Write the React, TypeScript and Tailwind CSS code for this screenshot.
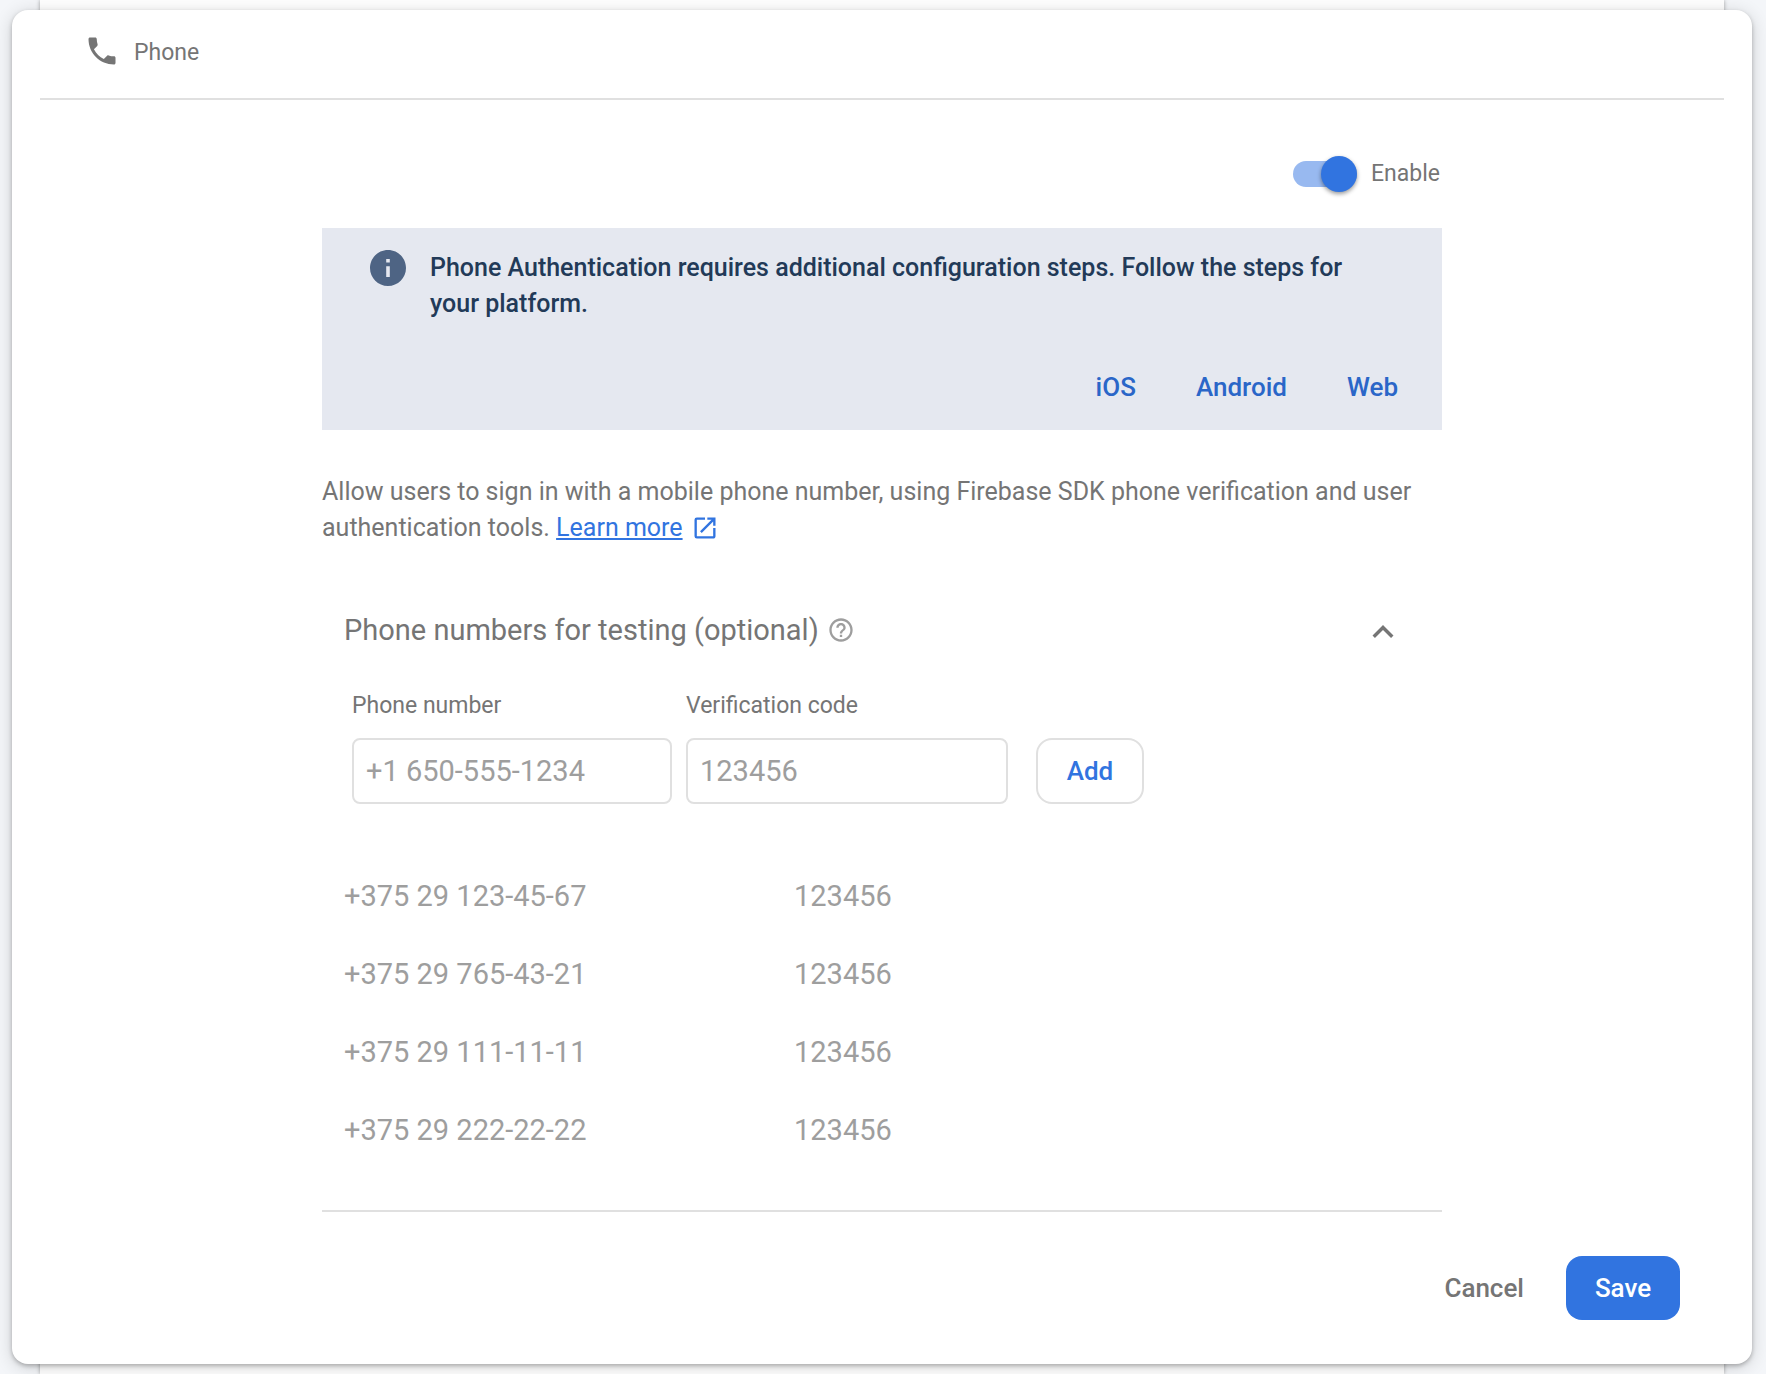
import { useState } from "react";
import { MdExpandLess, MdHelpOutline, MdOpenInNew, MdPhone } from "react-icons/md";

const testNumbers = [
  { phone: "+375 29 123-45-67", code: "123456" },
  { phone: "+375 29 765-43-21", code: "123456" },
  { phone: "+375 29 111-11-11", code: "123456" },
  { phone: "+375 29 222-22-22", code: "123456" },
];

const platforms = ["iOS", "Android", "Web"];

function InfoIcon() {
  return (
    <svg viewBox="2 2 20 20" className="size-9 shrink-0 fill-[#4e6484]" aria-hidden="true">
      <path d="M12 2C6.48 2 2 6.48 2 12s4.48 10 10 10 10-4.48 10-10S17.52 2 12 2zm1 15h-2v-6h2v6zm0-8h-2V7h2v2z" />
    </svg>
  );
}

function PlatformBanner() {
  return (
    <section className="bg-[#e5e8f0] pt-[22px] pr-11 pb-3.5 pl-12">
      <div className="flex gap-6 pr-10">
        <InfoIcon />
        <p className="text-[25px] leading-9 font-medium text-[#223a58]">
          Phone Authentication requires additional configuration steps. Follow the steps for your platform.
        </p>
      </div>
      <nav className="mt-9 flex justify-end gap-[60px] text-[26px] leading-[58px] font-medium text-[#2a66c8]">
        {platforms.map((name) => (
          <a key={name} href="#">
            {name}
          </a>
        ))}
      </nav>
    </section>
  );
}

function TestNumbers() {
  const [open, setOpen] = useState(true);
  return (
    <section className="px-[22px] pt-14">
      <div className="flex items-center justify-between pr-4">
        <h2 className="flex items-center gap-2 text-[29px] leading-[56px]">
          Phone numbers for testing (optional)
          <MdHelpOutline className="size-7 text-[#9e9e9e]" />
        </h2>
        <button
          type="button"
          aria-label="Toggle test numbers"
          aria-expanded={open}
          onClick={() => setOpen(!open)}
          className="pt-1"
        >
          <MdExpandLess className="size-[42px]" />
        </button>
      </div>
      {open && (
        <>
          <form className="mt-8 flex items-end pl-2" onSubmit={(e) => e.preventDefault()}>
            <div className="flex flex-col gap-4">
              <label htmlFor="phone" className="text-[23px] leading-8">
                Phone number
              </label>
              <input
                id="phone"
                type="tel"
                placeholder="+1 650-555-1234"
                className="h-[66px] w-80 rounded-lg border-2 border-[#e0e0e0] px-3 text-[29px] placeholder:text-[#9e9e9e]"
              />
            </div>
            <div className="ml-3.5 flex flex-col gap-4">
              <label htmlFor="code" className="text-[23px] leading-8">
                Verification code
              </label>
              <input
                id="code"
                type="text"
                placeholder="123456"
                className="h-[66px] w-[322px] rounded-lg border-2 border-[#e0e0e0] px-3 text-[29px] placeholder:text-[#9e9e9e]"
              />
            </div>
            <button
              type="submit"
              className="ml-7 h-[66px] w-[108px] rounded-2xl border-2 border-[#e0e0e0] text-[26px] font-medium text-[#3174e0]"
            >
              Add
            </button>
          </form>
          <table className="mt-[54px] w-full table-fixed text-left text-[29px] text-[#9e9e9e]">
            <tbody>
              {testNumbers.map(({ phone, code }) => (
                <tr key={phone} className="h-[78px]">
                  <td className="w-[450px]">{phone}</td>
                  <td>{code}</td>
                </tr>
              ))}
            </tbody>
          </table>
        </>
      )}
    </section>
  );
}

export default function App() {
  const [enabled, setEnabled] = useState(true);
  return (
    <div className="min-h-screen bg-[#f4f6f9] pr-[42px] pl-10 font-[Roboto,sans-serif] text-[#757575]">
      <div className="flex min-h-screen flex-col bg-white py-2.5 shadow-[0_0_4px_rgba(0,0,0,0.35)]">
        <main className="-mx-7 flex-1 rounded-2xl bg-white shadow-[0_2px_4px_rgba(0,0,0,0.25),0_3px_18px_rgba(0,0,0,0.16)]">
          <header className="mx-7 flex h-[90px] items-center gap-3.5 border-b-2 border-[#e0e0e0] pb-1.5 pl-11">
            <MdPhone className="size-9" />
            <h1 className="pt-1 text-[23px] leading-8">Phone</h1>
          </header>

          <div className="mx-auto max-w-[1120px] border-b-2 border-[#e0e0e0] pb-10">
            <div className="flex h-32 items-center justify-end pt-5 pr-0.5">
              <label className="flex items-center gap-3.5 text-[23px] leading-8">
                <input
                  type="checkbox"
                  role="switch"
                  checked={enabled}
                  onChange={() => setEnabled(!enabled)}
                  className="flex h-[26px] w-16 appearance-none items-center justify-start rounded-full bg-[#bdbdbd] before:size-9 before:shrink-0 before:rounded-full before:bg-white before:shadow-[0_2px_4px_rgba(0,0,0,0.4)] checked:justify-end checked:bg-[#98b9f0] checked:before:bg-[#3174e0]"
                />
                Enable
              </label>
            </div>
            <PlatformBanner />
            <p className="mt-11 text-[25px] leading-9">
              Allow users to sign in with a mobile phone number, using Firebase SDK phone verification and user
              authentication tools.{" "}
              <a href="#" className="text-[#3174e0] underline decoration-2 underline-offset-2">
                Learn more
              </a>
              <MdOpenInNew className="ml-2 inline size-7 align-text-bottom text-[#3174e0]" />
            </p>
            <TestNumbers />
          </div>

          <footer className="flex items-center justify-end gap-[42px] px-[72px] py-11 text-[26px] font-medium">
            <button type="button">Cancel</button>
            <button type="button" className="h-16 w-[114px] rounded-2xl bg-[#3174e0] text-white">
              Save
            </button>
          </footer>
        </main>
      </div>
    </div>
  );
}
